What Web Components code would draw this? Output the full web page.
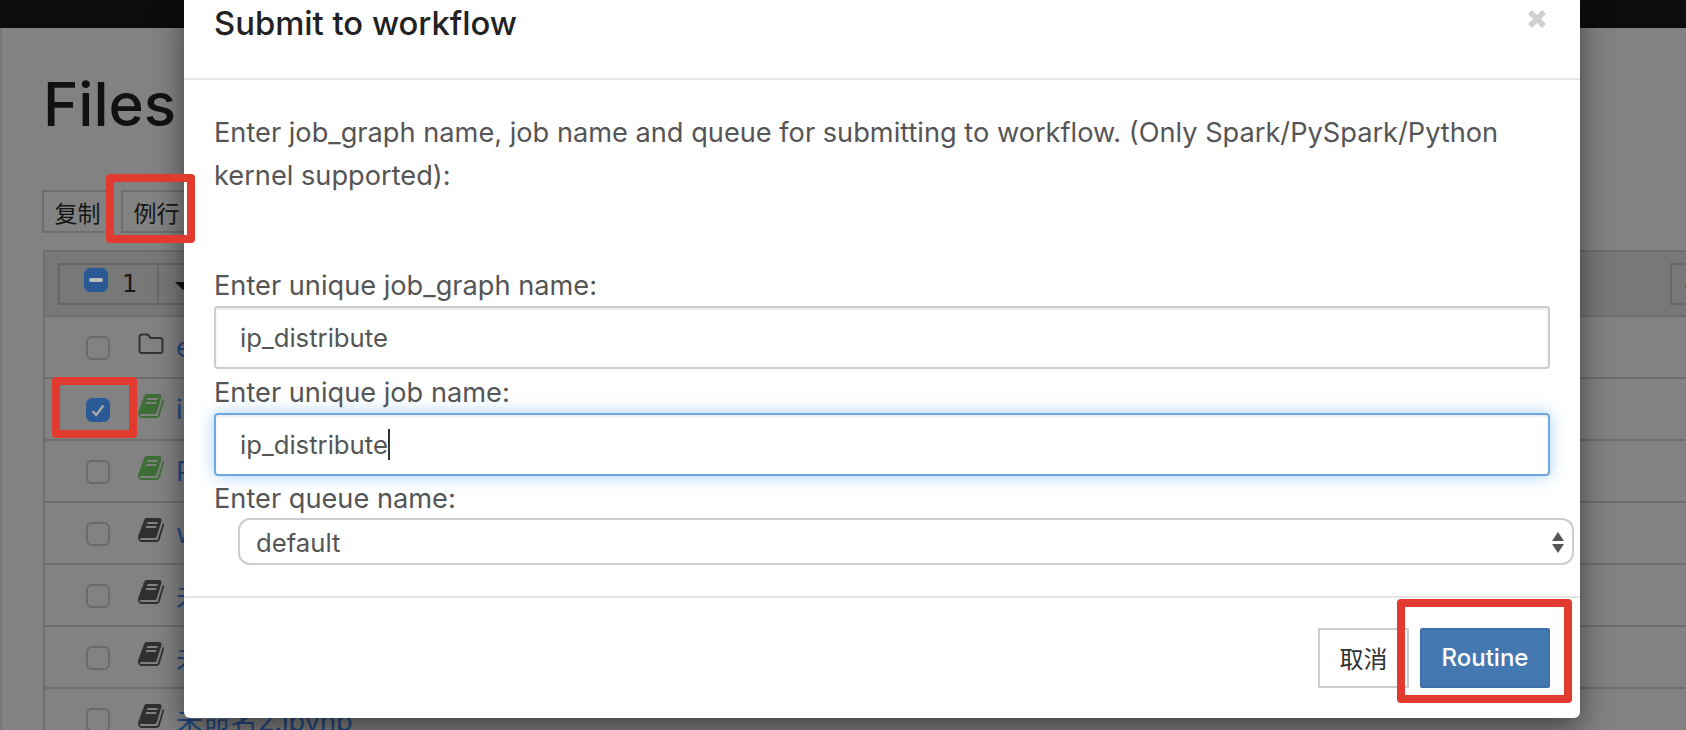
<!DOCTYPE html>
<html>
<head>
<meta charset="utf-8">
<title>Submit to workflow</title>
<style>
  html, body { margin: 0; height: 100%; overflow: hidden; }
  body { font-family: Inter, "Noto Sans CJK SC", sans-serif; }
</style>
</head>
<body>
<tree-page>
  <file-row slot="rows" kind="folder" name="examples"></file-row>
  <file-row slot="rows" kind="nb" running name="ip_distribute.ipynb" checked></file-row>
  <file-row slot="rows" kind="nb" running name="Python3.ipynb"></file-row>
  <file-row slot="rows" kind="nb" name="wordcount.ipynb"></file-row>
  <file-row slot="rows" kind="nb" name="未命名.ipynb"></file-row>
  <file-row slot="rows" kind="nb" name="未命名1.ipynb"></file-row>
  <file-row slot="rows" kind="nb" name="未命名2.ipynb"></file-row>
</tree-page>
<workflow-modal></workflow-modal>
<red-mark style="left:106px;top:174px;width:89px;height:69px"></red-mark>
<red-mark style="left:52px;top:377px;width:85px;height:61px"></red-mark>
<red-mark style="left:1397px;top:599px;width:175px;height:104px"></red-mark>

<script>
const FONT = 'Inter, "Noto Sans CJK SC", sans-serif';
// font-awesome 4 book, as used by the notebook list
const BOOK = 'M1639 478q40 57 18 129l-275 906q-19 64-76.5 107.5t-122.5 43.5h-923q-77 0-148.5-53.5t-99.5-131.5q-24-67-2-127 0-4 3-27t4-37q1-8-3-21.5t-3-19.5q2-11 8-21t16.5-23.5 16.5-23.5q23-38 45-91.5t30-91.5q3-10 .5-30t-.5-28q3-11 17-28t17-23q21-36 42-92t25-90q1-9-2.5-32t.5-28q4-13 22-30.5t22-22.5q19-26 42.5-84.5t27.5-96.5q1-8-3-25.5t-2-26.5q2-8 9-18t18-23 17-21q8-12 16.5-30.5t15-35 16-36 19.5-32 26.5-23.5 36-11.5 47.5 5.5l-1 3q38-9 51-9h761q74 0 114 56t18 130l-274 906q-36 119-71.5 153.5t-128.5 34.5h-869q-27 0-38 15-11 16-1 43 24 70 144 70h923q29 0 56-15.5t35-41.5l300-987q7-22 5-57 38 15 59 43zm-1064 2q-4 13 2 22.5t20 9.5h608q13 0 25.5-9.5t16.5-22.5l21-64q4-13-2-22.5t-20-9.5h-608q-13 0-25.5 9.5t-16.5 22.5zm-83 256q-4 13 2 22.5t20 9.5h608q13 0 25.5-9.5t16.5-22.5l21-64q4-13-2-22.5t-20-9.5h-608q-13 0-25.5 9.5t-16.5 22.5z';

class FileRow extends HTMLElement {
  constructor() {
    super();
    this.attachShadow({ mode: 'open' });
  }

  connectedCallback() {
    const isFolder = this.getAttribute('kind') === 'folder';
    const colour = this.hasAttribute('running') ? '#3f6d38' : '#303030';
    const icon = isFolder
      ? `<svg width="26" height="22" viewBox="0 0 26 22"><path d="M4 1.5h5a2 2 0 0 1 1.6.8L12.5 5H22a2.5 2.5 0 0 1 2.5 2.5v10A2.5 2.5 0 0 1 22 20H4a2.5 2.5 0 0 1-2.5-2.5V4A2.5 2.5 0 0 1 4 1.5z" fill="none" stroke="#333" stroke-width="2"/></svg>`
      : `<svg width="26" height="28" viewBox="0 0 1664 1792"><path d="${BOOK}" fill="${colour}"/></svg>`;
    const box = this.hasAttribute('checked')
      ? `<span class="box on"><svg width="14" height="13" viewBox="0 0 14 13"><path d="M1.5 7l3.8 4 7-9.5" fill="none" stroke="#aaa" stroke-width="2.4"/></svg></span>`
      : `<span class="box"></span>`;
    this.shadowRoot.innerHTML = `
      <style>
        :host { display: flex; align-items: center; height: 58px; padding: 2px 0 0 41px; border-top: 2px solid #6e6e6e; }
        .box { width: 24px; height: 24px; box-sizing: border-box; border: 2px solid #6a6a6a; border-radius: 6px; display: flex; align-items: center; justify-content: center; flex: none; }
        .box.on { background: #2a5a95; border-color: #2a5a95; }
        .icon { margin: 0 0 8px 28px; width: 26px; display: flex; }
        a { margin: 0 0 2px 12px; color: #234a85; font-size: 27.2px; white-space: nowrap; }
      </style>
      ${box}<span class="icon">${icon}</span><a>${this.getAttribute('name')}</a>`;
  }
}
customElements.define('file-row', FileRow);

class TreePage extends HTMLElement {
  constructor() {
    super();
    this.attachShadow({ mode: 'open' });
    this.shadowRoot.innerHTML = `
      <style>
        :host { display: block; height: 730px; background: #828282; overflow: hidden; font-family: ${FONT}; }
        .nav { height: 28px; background: #0c0c0c; }
        main { padding: 40px 0 0 41px; border-left: 2px solid #777; height: 662px; }
        h1 { margin: 0; font-size: 60px; font-weight: 500; line-height: 72px; color: #111; height: 122px; }
        .tools { display: flex; gap: 8px; height: 43px; margin-left: -1px; }
        .tools span { width: 71px; box-sizing: border-box; border: 2px solid #6e6e6e; font-size: 23px; display: flex; align-items: center; justify-content: center; color: #151515; }
        .table { margin-top: 17px; border: 2px solid #6e6e6e; border-right: 0; }
        .head { height: 63px; background: #787878; display: flex; align-items: center; justify-content: space-between; padding-left: 13px; box-sizing: border-box; }
        .group { display: flex; height: 42px; border: 2px solid #666; box-sizing: border-box; width: 150px; align-items: center; font: 24px "DejaVu Sans", sans-serif; color: #1a1a1a; }
        .minus { width: 24px; height: 24px; border-radius: 6px; background: #2a5a95; margin: 0 14px 8px 24px; display: flex; align-items: center; justify-content: center; }
        .minus::before { content: ""; width: 14px; height: 4px; background: #bbb; border-radius: 2px; }
        .sep { width: 2px; height: 100%; background: #666; margin-left: 20px; }
        .caret { margin: 4px 0 0 16px; border: 8px solid transparent; border-top: 8px solid #111; border-bottom: 0; }
        .sort { width: 16px; height: 42px; border: 2px solid #666; border-right: 0; box-sizing: border-box; padding: 6px 0 0 12px; font-size: 22px; line-height: 26px; color: #1a1a1a; overflow: hidden; white-space: nowrap; }
      </style>
      <div class="nav"></div>
      <main>
        <h1>Files</h1>
        <div class="tools"><span>复制</span><span>例行</span></div>
        <div class="table">
          <div class="head">
            <div class="group"><i class="minus"></i>1<i class="sep"></i><i class="caret"></i></div>
            <div class="sort">名称</div>
          </div>
          <slot name="rows"></slot>
        </div>
      </main>`;
  }
}
customElements.define('tree-page', TreePage);

class FormField extends HTMLElement {
  constructor() {
    super();
    this.attachShadow({ mode: 'open' });
  }

  connectedCallback() {
    const focused = this.hasAttribute('focused');
    this.shadowRoot.innerHTML = `
      <style>
        :host { display: block; }
        label { display: block; font-size: 27.2px; line-height: 36px; color: #555; margin-bottom: 2px; }
        .input { height: 63px; box-sizing: border-box; border: 2px solid ${focused ? '#6fa8e0' : '#ccc'}; border-radius: 4px; padding-left: 24px; display: flex; align-items: center; font-size: 25.7px; color: #555;
          box-shadow: inset 0 2px 2px rgba(0,0,0,.075)${focused ? ',0 0 16px rgba(102,175,233,.6)' : ''}; }
        .cursor { width: 2px; height: 31px; background: #333; }
      </style>
      <label>${this.getAttribute('label')}</label>
      <div class="input">${this.getAttribute('value')}${focused ? '<span class="cursor"></span>' : ''}</div>`;
  }
}
customElements.define('form-field', FormField);

class WorkflowModal extends HTMLElement {
  constructor() {
    super();
    this.attachShadow({ mode: 'open' });
    this.shadowRoot.innerHTML = `
      <style>
        :host { position: absolute; left: 184px; top: 0; width: 1396px; height: 718px; background: #fff; border-radius: 0 0 6px 6px; box-shadow: 0 10px 30px rgba(0,0,0,.5); display: flex; flex-direction: column; font-family: ${FONT}; }
        header { height: 80px; box-sizing: border-box; border-bottom: 2px solid #e5e5e5; padding: 0 30px; position: relative; }
        h4 { margin: 0; font-size: 32.8px; font-weight: 500; line-height: 46px; color: #222; }
        .close { position: absolute; left: 1343px; top: 9px; display: flex; }
        section { padding: 31px 30px 0; height: 518px; box-sizing: border-box; border-bottom: 2px solid #e5e5e5; }
        p { margin: 0 0 71px; font-size: 27.2px; line-height: 43px; color: #555; }
        form-field + form-field { margin-top: 6px; }
        .queue { margin-top: 5px; font-size: 27.2px; line-height: 36px; color: #555; }
        .select { margin: 1px -24px 0 24px; height: 47px; box-sizing: border-box; border: 2px solid #ccc; border-radius: 12px; padding: 2px 0 0 16px; display: flex; align-items: center; justify-content: space-between; font-size: 25.7px; color: #555; }
        .arrows { display: flex; flex-direction: column; gap: 3px; margin-right: 8px; }
        .arrows i { border: 6px solid transparent; }
        .arrows i:first-child { border-bottom: 9px solid #555; border-top: 0; }
        .arrows i:last-child { border-top: 9px solid #555; border-bottom: 0; }
        footer { display: flex; justify-content: flex-end; gap: 11px; padding: 30px 30px 0; }
        button { height: 60px; box-sizing: border-box; font: 24px ${FONT}; border: 2px solid #ccc; background: #fff; color: #333; width: 91px; padding: 0 0 2px; }
        button.primary { width: 130px; font-weight: 500; background: #4478b0; border-color: #3f6fa3; color: #fff; border-radius: 2px; }
      </style>
      <header><h4>Submit to workflow</h4>
        <span class="close"><svg width="20" height="20" viewBox="0 0 20 20"><path d="M3 3l14 14M17 3L3 17" stroke="#cfcfcf" stroke-width="5.5"/></svg></span></header>
      <section>
        <p>Enter job_graph name, job name and queue for submitting to workflow. (Only Spark/PySpark/Python kernel supported):</p>
        <form-field label="Enter unique job_graph name:" value="ip_distribute"></form-field>
        <form-field label="Enter unique job name:" value="ip_distribute" focused></form-field>
        <div class="queue">Enter queue name:</div>
        <div class="select">default<span class="arrows"><i></i><i></i></span></div>
      </section>
      <footer><button>取消</button><button class="primary">Routine</button></footer>`;
  }
}
customElements.define('workflow-modal', WorkflowModal);

class RedMark extends HTMLElement {
  constructor() {
    super();
    this.attachShadow({ mode: 'open' });
    this.shadowRoot.innerHTML = `<style>:host { position: absolute; box-sizing: border-box; border: 8px solid #e23a2e; border-radius: 4px; }</style>`;
  }
}
customElements.define('red-mark', RedMark);
</script>
</body>
</html>
